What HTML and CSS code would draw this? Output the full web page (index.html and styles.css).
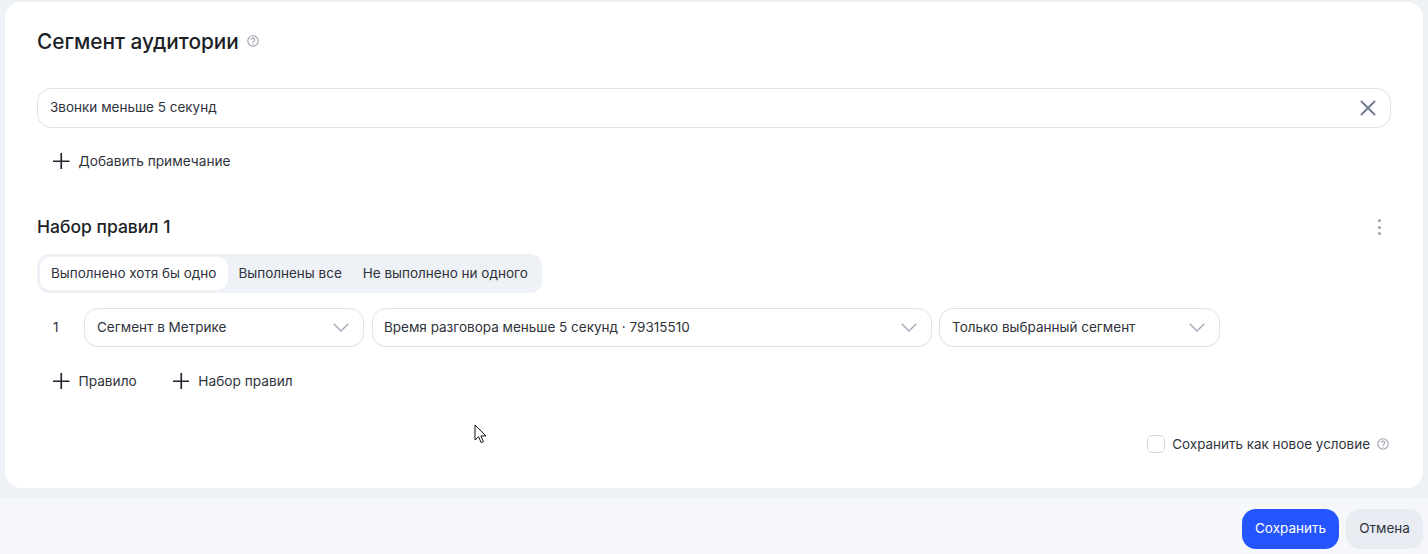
FILE: index.html
```html
<!DOCTYPE html>
<html>

<head>
    <meta http-equiv="Content-Type" content="text/html;charset=utf-8">
    <title>Сегмент аудитории</title>
    <link rel="stylesheet" href="styles.css">
</head>

<body>
    <div class="panel">
        <div class="card">
            <div class="title-row">
                <h1 class="title">Сегмент аудитории</h1>
                <svg class="help help-title" viewBox="0 0 12 12">
                    <circle cx="6" cy="6" r="5.2" />
                    <path d="M4.4 4.8a1.6 1.6 0 1 1 2.5 1.3c-.6.4-.9.7-.9 1.3" />
                    <path d="M6 8.6v.8" />
                </svg>
            </div>

            <div class="field name-field">
                <span class="field-text">Звонки меньше 5 секунд</span>
                <svg class="clear-icon" viewBox="0 0 16 16">
                    <path d="M1 1l14 14M15 1L1 15" />
                </svg>
            </div>

            <div class="add-row note-row">
                <button class="add-btn">
                    <svg class="plus" viewBox="0 0 18 18"><path d="M9 0v18M0 9h18" /></svg>
                    Добавить примечание
                </button>
            </div>

            <div class="rules-head">
                <h2 class="rules-title">Набор правил 1</h2>
                <div class="dots"><i></i><i></i><i></i></div>
            </div>

            <div class="tabs">
                <span class="tab tab-active">Выполнено хотя бы одно</span>
                <span class="tab tab-all">Выполнены все</span>
                <span class="tab">Не выполнено ни одного</span>
            </div>

            <div class="rule-row">
                <span class="rule-num">1</span>
                <div class="field select select-type">
                    <span class="field-text">Сегмент в Метрике</span>
                    <svg class="chevron" viewBox="0 0 16 9"><path d="M.7.7L8 8l7.3-7.3" /></svg>
                </div>
                <div class="field select select-segment">
                    <span class="field-text">Время разговора меньше 5 секунд · 79315510</span>
                    <svg class="chevron" viewBox="0 0 16 9"><path d="M.7.7L8 8l7.3-7.3" /></svg>
                </div>
                <div class="field select select-mode">
                    <span class="field-text">Только выбранный сегмент</span>
                    <svg class="chevron" viewBox="0 0 16 9"><path d="M.7.7L8 8l7.3-7.3" /></svg>
                </div>
            </div>

            <div class="add-row rule-actions">
                <button class="add-btn">
                    <svg class="plus" viewBox="0 0 18 18"><path d="M9 0v18M0 9h18" /></svg>
                    Правило
                </button>
                <button class="add-btn">
                    <svg class="plus" viewBox="0 0 18 18"><path d="M9 0v18M0 9h18" /></svg>
                    Набор правил
                </button>
            </div>

            <div class="save-new">
                <span class="checkbox"></span>
                <span class="save-label">Сохранить как новое условие</span>
                <svg class="help help-save" viewBox="0 0 12 12">
                    <circle cx="6" cy="6" r="5.2" />
                    <path d="M4.4 4.8a1.6 1.6 0 1 1 2.5 1.3c-.6.4-.9.7-.9 1.3" />
                    <path d="M6 8.6v.8" />
                </svg>
            </div>
        </div>
    </div>

    <div class="footer">
        <button class="btn btn-save">Сохранить</button>
        <button class="btn btn-cancel">Отмена</button>
    </div>

    <svg class="mouse" viewBox="0 0 13 20">
        <path d="M1 1v15l3.6-3.3 2.6 6 2.3-1-2.6-5.8H12z" />
    </svg>
</body>

</html>
```

FILE: styles.css
```css
* {
    box-sizing: border-box;
}

body {
    margin: 0;
    height: 554px;
    overflow: hidden;
    background-color: #f6f7fb;
    font-family: Inter, "Noto Sans", sans-serif;
    font-size: 13.5px;
    color: #2f333c;
}

button {
    font: inherit;
    border: 0;
    background: none;
    padding: 0;
    color: inherit;
}

.panel {
    height: 498px;
    padding: 2px 5px 10px;
    background-color: #eef1f6;
}

.card {
    height: 486px;
    padding: 27px 32px 0;
    background-color: #fff;
    border-radius: 16px;
}

.title-row {
    display: flex;
    align-items: center;
    gap: 8px;
    height: 24px;
}

.title {
    margin: 0;
    font-size: 20.8px;
    font-weight: 500;
    color: #1c1f26;
}

.help {
    width: 12px;
    height: 12px;
    fill: none;
    stroke: #9aa0ac;
    stroke-width: 1.1;
}

.help-save {
    margin-right: 2px;
}

.field {
    display: flex;
    align-items: center;
    justify-content: space-between;
    height: 40px;
    padding: 0 12px;
    background-color: #fff;
    border: 1px solid #dfe1e6;
    border-radius: 14px;
}

.field-text {
    margin-bottom: 2px;
}

.name-field {
    margin-top: 35px;
}

.clear-icon {
    width: 16px;
    height: 16px;
    margin-right: 2px;
    fill: none;
    stroke: #6f788c;
    stroke-width: 1.8;
}

.add-row {
    display: flex;
    gap: 36px;
    padding-left: 16px;
}

.note-row {
    margin-top: 24px;
}

.add-btn {
    display: flex;
    align-items: center;
    gap: 9px;
    height: 18px;
    font-size: 13.7px;
}

.plus {
    width: 16.5px;
    height: 16.5px;
    fill: none;
    stroke: #20232a;
    stroke-width: 1.8;
}

.rules-head {
    display: flex;
    align-items: center;
    justify-content: space-between;
    margin-top: 46px;
    height: 22px;
    padding-right: 10px;
}

.rules-title {
    margin: 0 0 2px;
    font-size: 17.5px;
    font-weight: 500;
    color: #1c1f26;
}

.dots {
    display: flex;
    flex-direction: column;
    gap: 3.6px;
}

.dots i {
    width: 3px;
    height: 3px;
    border-radius: 50%;
    background-color: #9aa0ac;
}

.tabs {
    display: inline-flex;
    margin-top: 16px;
    padding: 3px;
    height: 39px;
    background-color: #eef1f6;
    border-radius: 12px;
}

.tab {
    display: flex;
    align-items: center;
    padding: 0 11px 2px;
    border-radius: 10px;
}

.tab-active {
    padding-right: 12px;
    background-color: #fff;
}

.tab-all {
    padding-left: 10px;
    padding-right: 10px;
}

.rule-row {
    display: flex;
    align-items: center;
    gap: 8px;
    margin-top: 15px;
}

.rule-num {
    width: 39px;
    padding-left: 16px;
    margin-bottom: 2px;
}

.select {
    height: 39px;
}

.select-type {
    width: 280px;
}

.select-segment {
    width: 560px;
    padding-left: 11px;
}

.select-mode {
    width: 281px;
    margin-left: -1px;
}

.chevron {
    width: 16px;
    height: 9px;
    margin-right: 2px;
    fill: none;
    stroke: #a3aaba;
    stroke-width: 1.4;
}

.rule-actions {
    margin-top: 25px;
}

.save-new {
    display: flex;
    align-items: center;
    justify-content: flex-end;
    margin-top: 44px;
    height: 20px;
    gap: 7px;
}

.save-label {
    font-size: 13.45px;
}

.checkbox {
    width: 18px;
    height: 18px;
    border: 1px solid #d5d8de;
    border-radius: 5px;
}

.footer {
    display: flex;
    justify-content: flex-end;
    gap: 7px;
    padding: 11px 5px 0;
}

.btn {
    height: 40px;
    padding-bottom: 2px;
    border-radius: 14px;
}

.btn-save {
    width: 97px;
    background-color: #2555ff;
    color: #fff;
}

.btn-cancel {
    width: 77px;
    background-color: #e9ecf3;
}

.mouse {
    position: absolute;
    left: 474px;
    top: 424px;
    width: 13px;
    height: 20px;
    fill: #fff;
    stroke: #111;
    stroke-width: 1;
}
```
